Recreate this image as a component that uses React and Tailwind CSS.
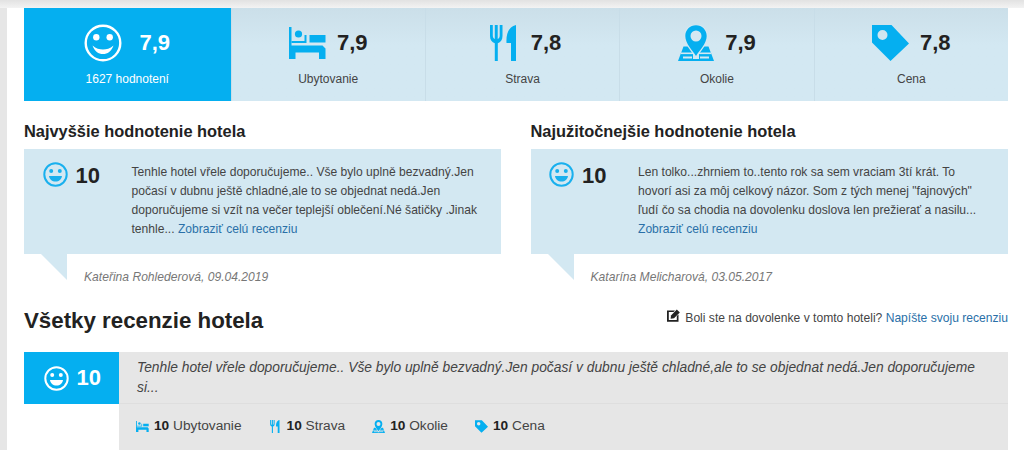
const FONT = "font-['Liberation_Sans',Arial,sans-serif]";

function BigSmile() {
  return (
    <svg width="38" height="38" viewBox="0 0 38 38" className="shrink-0">
      <circle cx="19" cy="19" r="17.3" fill="none" stroke="#fff" strokeWidth="2.4" />
      <circle cx="12.3" cy="13.2" r="3.2" fill="#fff" />
      <circle cx="25.7" cy="13.2" r="3.2" fill="#fff" />
      <path d="M8.5 21.5C12 24.5 15.5 25.5 19 25.5S26 24.5 29.5 21.5C27.5 27.5 23.5 30 19 30S10.5 27.5 8.5 21.5Z" fill="#fff" />
    </svg>
  );
}

function SmallSmile({ color }) {
  return (
    <svg width="25" height="25" viewBox="0 0 25 25" className="shrink-0">
      <circle cx="12.5" cy="12.5" r="11.2" fill="none" stroke={color} strokeWidth="2" />
      <circle cx="8.2" cy="9" r="2" fill={color} />
      <circle cx="16.8" cy="9" r="2" fill={color} />
      <path d="M6 14H19C18.5 17.5 16 19.5 12.5 19.5S6.5 17.5 6 14Z" fill={color} />
    </svg>
  );
}

function BedIcon({ className }) {
  return (
    <svg viewBox="0 0 37 32" className={className} fill="#05aff0">
      <rect x="0" y="0" width="2.5" height="32" />
      <circle cx="9.5" cy="7" r="3.6" />
      <path d="M2.5 14H15.5V8H17.5V16H2.5Z" />
      <rect x="20.5" y="8" width="16" height="7.5" />
      <path d="M0 18.5H33.5L36.5 21.5V32H30V25.5H6.5V32H0Z" />
    </svg>
  );
}

function ForkKnifeIcon({ className }) {
  return (
    <svg viewBox="0 0 27 36" className={className} fill="#05aff0">
      <path d="M0 0H2.8V10.5C2.8 12.5 3.5 13.5 4.8 14V0H7.7V14C9 13.5 9.7 12.5 9.7 10.5V0H12.5V11C12.5 15 10.5 17.5 7.8 18.2V36H4.8V18.2C2 17.5 0 15 0 11Z" />
      <path d="M26 0V36H21V18H16.5C16 10 18 2 26 0Z" />
    </svg>
  );
}

function PinIcon({ className, hole }) {
  return (
    <svg viewBox="0 0 36 36" className={className} fill="#05aff0">
      <path d="M5.5 21.5H30.5L36 36H0Z" />
      <rect x="3" y="27.5" width="30" height="1.6" fill={hole} />
      <rect x="5" y="31.5" width="9" height="2" fill={hole} />
      <rect x="22" y="31.5" width="9" height="2" fill={hole} />
      <rect x="15" y="21" width="6" height="13" fill={hole} />
      <path d="M18 33C14 27 6 19 6 11 6 4.5 11.5 -1 18 -1S30 4.5 30 11C30 19 22 27 18 33Z" fill={hole} />
      <path fillRule="evenodd" d="M18 31C14.5 25.5 7.3 18.5 7.3 11 7.3 5 12 .3 18 .3S28.7 5 28.7 11C28.7 18.5 21.5 25.5 18 31ZM18 5.5A5.5 5.5 0 1 0 18 16.5 5.5 5.5 0 1 0 18 5.5Z" />
    </svg>
  );
}

function TagIcon({ className }) {
  return (
    <svg viewBox="0 0 37 36" className={className} fill="#05aff0">
      <path fillRule="evenodd" d="M0 0H19.5L37 18.5 18.5 36 0 17.5ZM10.5 5A5 5 0 1 0 10.5 15 5 5 0 1 0 10.5 5Z" />
    </svg>
  );
}

function EditIcon() {
  return (
    <svg width="13" height="13" viewBox="0 0 13 13" className="shrink-0 mb-[5px]">
      <path d="M0 1.5H8L6.5 3H1.8V11H9.8V7L11.5 5.5V12.8H0Z" fill="#222" />
      <path d="M4 6.5L9.8 .6 12.8 3.4 7 9.2 3.6 9.8Z" fill="#222" />
    </svg>
  );
}

function Stat({ icon, value, label, gap, shift }) {
  return (
    <div className="flex flex-col items-center border-l border-[#c8dde8] pt-[17px] bg-linear-to-b from-[#cbdfe9] to-[#d3e8f2] to-40%">
      <div className={`flex items-center h-[36px] ${gap} ${shift}`}>
        {icon}
        <span className="text-[22px] leading-none font-bold text-[#222]">{value}</span>
      </div>
      <div className="mt-[8px] text-[12px] leading-[20px] text-[#444]">{label}</div>
    </div>
  );
}

function HighlightCard({ title, text, link, author }) {
  return (
    <div>
      <h3 className="text-[16.4px] leading-[20px] font-bold text-[#222] mb-[8px]">{title}</h3>
      <div className="flex bg-[#d3e8f2] h-[105px] pt-[13px] pr-[20px]">
        <div className="w-[107.5px] shrink-0 pl-[18.5px] flex items-start gap-[8px] text-[#222]">
          <SmallSmile color="#19b0ee" />
          <span className="pt-[1px] text-[22px] leading-[26px] font-bold">10</span>
        </div>
        <p className="pt-[1px] text-[12.1px] leading-[19px] text-[#444]">
          {text} <a className="text-[#2a70a8]">{link}</a>
        </p>
      </div>
      <div className="flex h-[26px]">
        <svg width="26" height="26" viewBox="0 0 26 26" className="ml-[17px] shrink-0">
          <path d="M0 0H26V26Z" fill="#d3e8f2" />
        </svg>
        <span className="ml-[17px] pt-[13px] text-[12.1px] leading-[20px] italic text-[#777] whitespace-nowrap">{author}</span>
      </div>
    </div>
  );
}

function ScoreItem({ icon, label }) {
  return (
    <div className="flex items-center gap-[5px] text-[13.7px] leading-[20px] text-[#444]">
      <span className="w-[13px] flex justify-center">{icon}</span>
      <span><b className="font-bold text-[#222]">10</b> {label}</span>
    </div>
  );
}

export default function App() {
  return (
    <div className={`${FONT} h-[450px] overflow-hidden bg-white`}>
      <div className="h-[8px] bg-linear-to-b from-[#e2e2e2] to-[#f3f3f3]" />
      <div className="h-[442px] border-l-[7px] border-[#e6e6e6] pl-[17px] pr-[16px]">
        {/* Hodnotenia */}
        <div className="grid grid-cols-[206.5px_repeat(4,1fr)] h-[93px]">
          <div className="flex flex-col items-center bg-[#05aff0] pt-[17px]">
            <div className="flex items-center h-[36px] gap-[17px] text-white">
              <BigSmile />
              <span className="text-[22px] leading-none font-bold">7,9</span>
            </div>
            <div className="mt-[8px] text-[12px] leading-[20px] text-white">1627 hodnotení</div>
          </div>
          <Stat icon={<BedIcon className="w-[37px] h-[32px]" />} value="7,9" label="Ubytovanie" gap="gap-[11px]" shift="" />
          <Stat icon={<ForkKnifeIcon className="w-[27px] h-[36px]" />} value="7,8" label="Strava" gap="gap-[14px]" shift="ml-[6px]" />
          <Stat icon={<PinIcon className="w-[36px] h-[36px]" hole="#d3e8f2" />} value="7,9" label="Okolie" gap="gap-[11px]" shift="" />
          <Stat icon={<TagIcon className="w-[37px] h-[36px]" />} value="7,8" label="Cena" gap="gap-[11px]" shift="" />
        </div>

        {/* Najlepsie recenzie */}
        <div className="grid grid-cols-[476.5px_477.5px] gap-[30px] mt-[20px]">
          <HighlightCard
            title="Najvyššie hodnotenie hotela"
            text="Tenhle hotel vřele doporučujeme.. Vše bylo uplně bezvadný.Jen počasí v dubnu ještě chladné,ale to se objednat nedá.Jen doporučujeme si vzít na večer teplejší oblečení.Né šatičky .Jinak tenhle..."
            link="Zobraziť celú recenziu"
            author="Kateřina Rohlederová, 09.04.2019"
          />
          <HighlightCard
            title="Najužitočnejšie hodnotenie hotela"
            text="Len tolko...zhrniem to..tento rok sa sem vraciam 3tí krát. To hovorí asi za môj celkový názor. Som z tých menej &quot;fajnových&quot; ľudí čo sa chodia na dovolenku doslova len prežierať a nasilu..."
            link="Zobraziť celú recenziu"
            author="Katarína Melicharová, 03.05.2017"
          />
        </div>

        {/* Vsetky recenzie */}
        <div className="flex items-center justify-between h-[30px] mt-[26px] mb-[16px]">
          <h2 className="text-[22.3px] leading-[30px] font-bold text-[#222]">Všetky recenzie hotela</h2>
          <div className="flex items-center gap-[5px] text-[12.1px] leading-[20px] text-[#444] mb-[6px]">
            <EditIcon />
            <span>Boli ste na dovolenke v tomto hoteli? <a className="text-[#2a70a8]">Napíšte svoju recenziu</a></span>
          </div>
        </div>

        <div className="flex">
          <div className="w-[95px] h-[52px] shrink-0 flex items-center gap-[8px] pl-[19.5px] bg-[#05aff0] text-white">
            <SmallSmile color="#fff" />
            <span className="text-[22px] leading-none font-bold">10</span>
          </div>
          <div className="flex-1 bg-[#e6e6e6]">
            <p className="pt-[6px] pb-[5px] px-[18px] text-[13.8px] leading-[20px] italic text-[#444] border-b border-[#dedede]">
              Tenhle hotel vřele doporučujeme.. Vše bylo uplně bezvadný.Jen počasí v dubnu ještě chladné,ale to se objednat nedá.Jen doporučujeme si...
            </p>
            <div className="flex items-start gap-[27px] pl-[17px] pt-[12px] h-[50px]">
              <ScoreItem icon={<BedIcon className="w-[13px] h-[11px]" />} label="Ubytovanie" />
              <ScoreItem icon={<ForkKnifeIcon className="w-[10px] h-[13px]" />} label="Strava" />
              <ScoreItem icon={<PinIcon className="w-[13px] h-[13px]" hole="#e6e6e6" />} label="Okolie" />
              <ScoreItem icon={<TagIcon className="w-[13px] h-[13px]" />} label="Cena" />
            </div>
          </div>
        </div>
      </div>
    </div>
  );
}
